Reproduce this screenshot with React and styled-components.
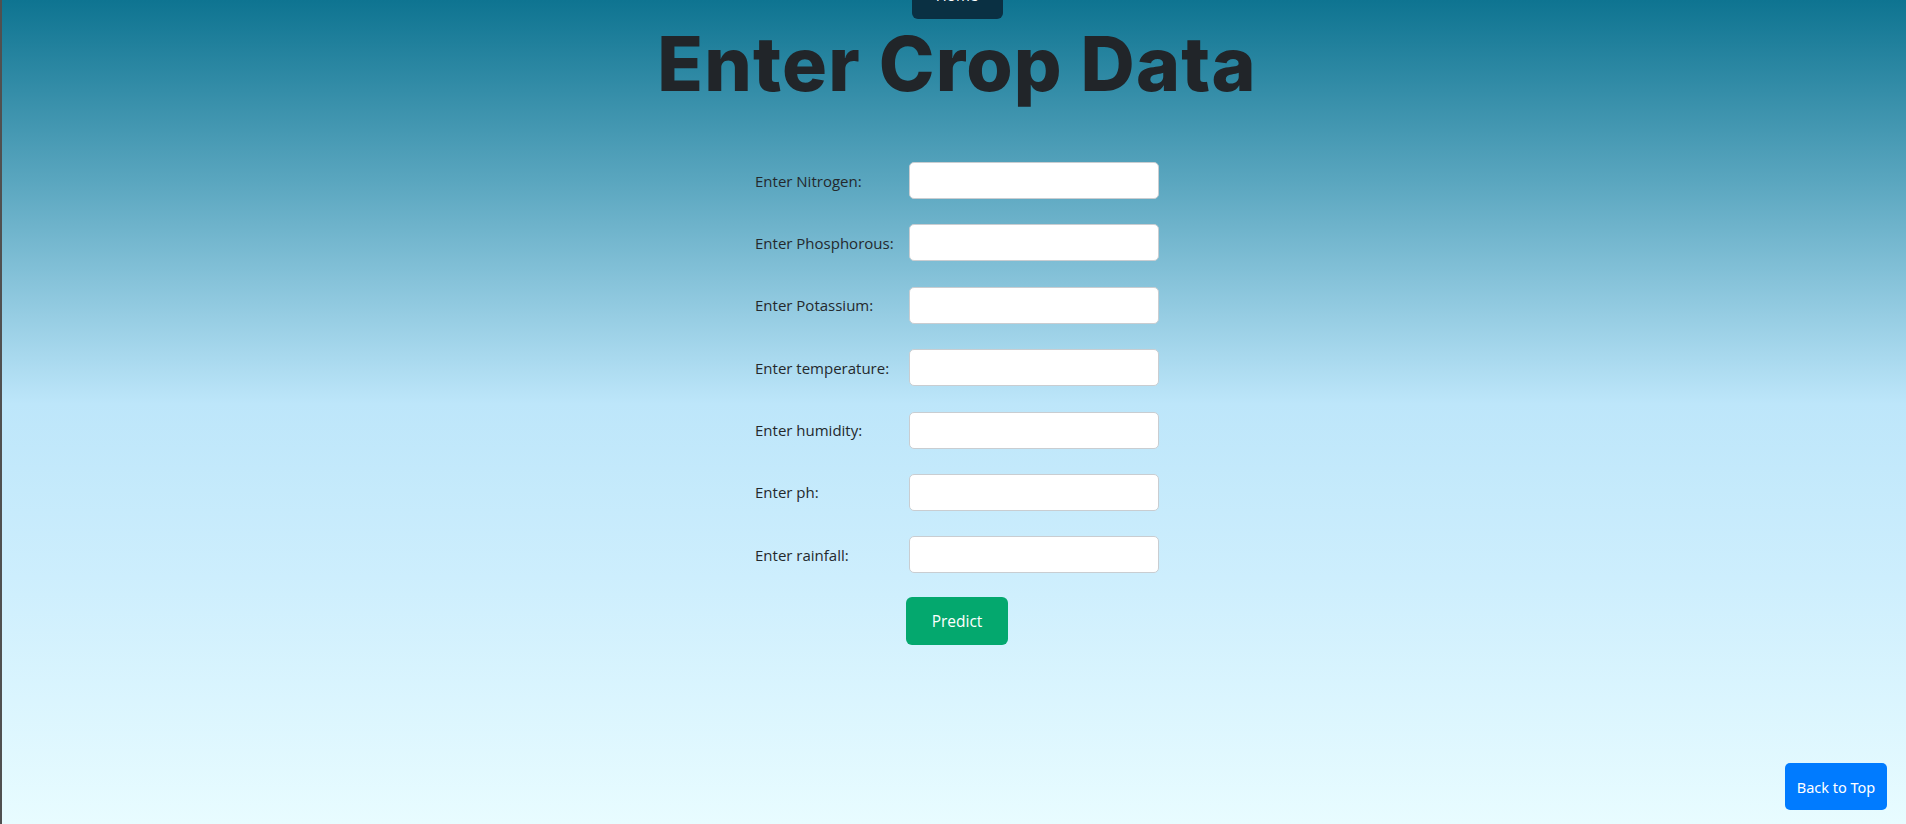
import React from 'react';
import styled, { createGlobalStyle } from 'styled-components';

const GlobalStyle = createGlobalStyle`
  html, body {
    margin: 0;
    padding: 0;
    height: 100%;
    overflow: hidden;
  }
  body {
    font-family: 'Open Sans', 'Liberation Sans', sans-serif;
  }
  #root {
    min-height: 100%;
  }
`;

const fields = [
  { id: 'nitrogen', label: 'Enter Nitrogen:' },
  { id: 'phosphorous', label: 'Enter Phosphorous:' },
  { id: 'potassium', label: 'Enter Potassium:' },
  { id: 'temperature', label: 'Enter temperature:' },
  { id: 'humidity', label: 'Enter humidity:' },
  { id: 'ph', label: 'Enter ph:' },
  { id: 'rainfall', label: 'Enter rainfall:' },
];

export default function App() {
  return (
    <>
      <GlobalStyle />
      <Page>
        <Nav>
          <HomeButton>Home</HomeButton>
        </Nav>
        <Title>Enter Crop Data</Title>
        <Form onSubmit={(e) => e.preventDefault()}>
          {fields.map((f) => (
            <React.Fragment key={f.id}>
              <Label htmlFor={f.id}>{f.label}</Label>
              <Input id={f.id} type="text" />
            </React.Fragment>
          ))}
          <PredictButton type="submit">Predict</PredictButton>
        </Form>
      </Page>
      <BackToTop>Back to Top</BackToTop>
    </>
  );
}

const Page = styled.main`
  min-height: 100vh;
  box-sizing: border-box;
  border-left: 2px solid #505050;
  padding-left: 6px;
  display: flex;
  flex-direction: column;
  align-items: center;
  background: linear-gradient(
    180deg,
    #0e7491 0%,
    #5aa6bf 22%,
    #bde6fa 49%,
    #cdeefd 70%,
    #e8fcff 100%
  );
`;

const Nav = styled.nav`
  display: flex;
  justify-content: center;
  margin-top: -21px;
`;

const HomeButton = styled.button`
  width: 91px;
  height: 40px;
  border: none;
  border-radius: 0 0 6px 6px;
  background: #0a3043;
  color: #fff;
  font-family: 'Open Sans', sans-serif;
  font-size: 15px;
  line-height: 20px;
  padding: 0 0 8px;
`;

const Title = styled.h1`
  margin: 0;
  font-family: Inter, 'Noto Sans', sans-serif;
  font-weight: 800;
  font-size: 75px;
  line-height: 1.2;
  letter-spacing: 1.2px;
  color: #212529;
`;

const Form = styled.form`
  display: grid;
  grid-template-columns: 154px 250px;
  row-gap: 25.4px;
  align-items: center;
  margin-top: 53px;
`;

const Label = styled.label`
  font-family: 'Open Sans', sans-serif;
  font-size: 15px;
  color: #24292d;
  white-space: nowrap;
`;

const Input = styled.input`
  box-sizing: border-box;
  width: 250px;
  height: 37px;
  border: 1px solid #c9cdd1;
  border-radius: 5px;
  background: #fff;
  padding: 0 10px;
  font-size: 15px;
  outline: none;
`;

const PredictButton = styled.button`
  grid-column: 1 / -1;
  justify-self: center;
  width: 102px;
  height: 48px;
  margin-top: -2px;
  border: none;
  border-radius: 6px;
  background: #04a86e;
  color: #fff;
  font-family: 'Open Sans', sans-serif;
  font-weight: 500;
  font-size: 15.5px;
  cursor: pointer;
`;

const BackToTop = styled.button`
  position: fixed;
  right: 19px;
  bottom: 14px;
  width: 102px;
  height: 47px;
  border: none;
  border-radius: 5px;
  background: #007bff;
  color: #fff;
  font-family: 'Noto Sans', 'Open Sans', sans-serif;
  font-size: 14.5px;
  cursor: pointer;
`;
